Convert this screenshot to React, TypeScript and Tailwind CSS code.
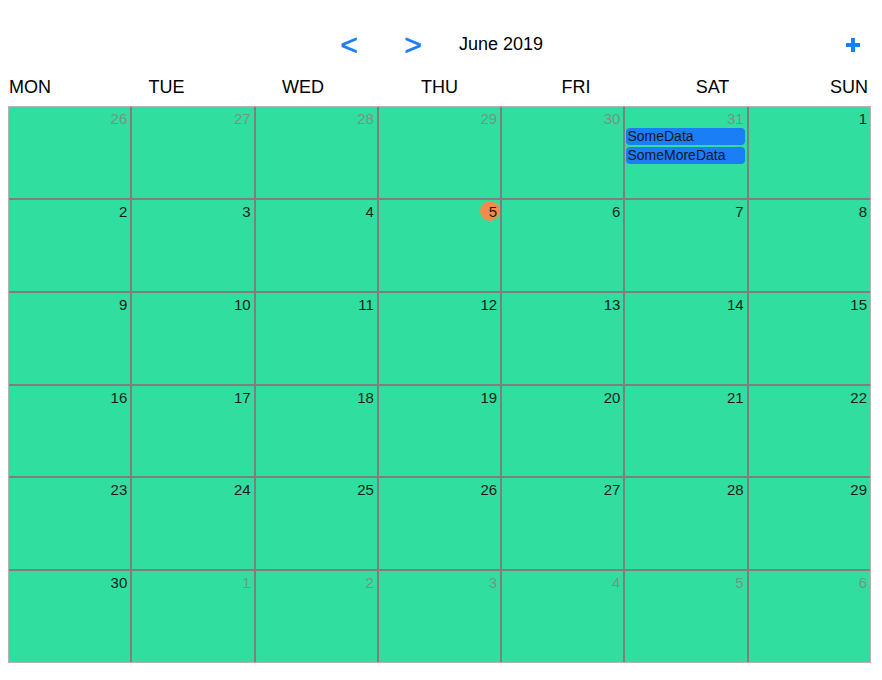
import React from "react";

type Cell = { day: number; current: boolean; today?: boolean; events?: string[] };

const DAYS = ["MON", "TUE", "WED", "THU", "FRI", "SAT", "SUN"];

const buildCells = (): Cell[] => {
  const cells: Cell[] = [];
  [26, 27, 28, 29, 30, 31].forEach((d) =>
    cells.push({ day: d, current: false, events: d === 31 ? ["SomeData", "SomeMoreData"] : [] })
  );
  for (let d = 1; d <= 30; d++) cells.push({ day: d, current: true, today: d === 5 });
  for (let d = 1; d <= 6; d++) cells.push({ day: d, current: false });
  return cells;
};

const App = () => {
  const cells = buildCells();
  return (
    <div
      className="w-[882px] h-[680px] bg-white text-black"
      style={{ fontFamily: '"Liberation Sans", Arial, sans-serif' }}
    >
      <div className="relative h-[70px] flex items-center pl-[339px] pt-[20px]">
        <button className="text-[#1a7ef5] text-[30px] leading-none w-[20px] [-webkit-text-stroke:0.6px_#1a7ef5]">&lt;</button>
        <button className="text-[#1a7ef5] text-[30px] leading-none w-[20px] ml-[44px] [-webkit-text-stroke:0.6px_#1a7ef5]">&gt;</button>
        <div className="text-[18px] ml-[36px] mb-[2px]">June 2019</div>
        <button className="absolute right-[22px] top-[38px] w-[14px] h-[14px]">
          <svg viewBox="0 0 14 14" width="14" height="14">
            <rect x="5" y="0" width="4" height="14" fill="#1a7ef5" />
            <rect x="0" y="5" width="14" height="4" fill="#1a7ef5" />
          </svg>
        </button>
      </div>
      <div className="flex justify-between ml-[9px] w-[861px] h-[36px] pb-[2px] items-center text-[18px]">
        {DAYS.map((d) => (
          <div key={d} className="w-[42px] text-center whitespace-nowrap flex justify-center">
            {d}
          </div>
        ))}
      </div>
      <div className="ml-[8px] w-[863px] border border-[#b3b3b3] bg-[#7f7f7f]">
        <div className="grid grid-cols-7 grid-rows-6 gap-[2px] h-[555px]">
          {cells.map((c, i) => (
            <div key={i} className="bg-[#30df9f] relative pt-[2px] pr-[3px]">
              <div className="flex justify-end h-[19px]">
                {c.today ? (
                  <div className="relative flex items-center justify-end">
                    <div className="absolute right-[-3px] top-[-1px] w-[20px] h-[20px] rounded-full bg-[#f38b4a]" />
                    <span className="relative text-[15px] leading-[19px] text-[#1c1c1c]">{c.day}</span>
                  </div>
                ) : (
                  <span
                    className={
                      c.current
                        ? "text-[15px] leading-[19px] text-[#1c1c1c]"
                        : "text-[15px] leading-[19px] text-[#789487]"
                    }
                  >
                    {c.day}
                  </span>
                )}
              </div>
              {c.events && c.events.length > 0 && (
                <div className="flex flex-col gap-[2px] pl-[1px] mr-[-1px] mt-[0px]">
                  {c.events.map((e) => (
                    <div
                      key={e}
                      className="bg-[#1a7ef5] rounded-[4px] h-[17px] text-[14px] leading-[17px] pl-[1px] text-[#101828] whitespace-nowrap"
                    >
                      {e}
                    </div>
                  ))}
                </div>
              )}
            </div>
          ))}
        </div>
      </div>
    </div>
  );
};

export default App;
